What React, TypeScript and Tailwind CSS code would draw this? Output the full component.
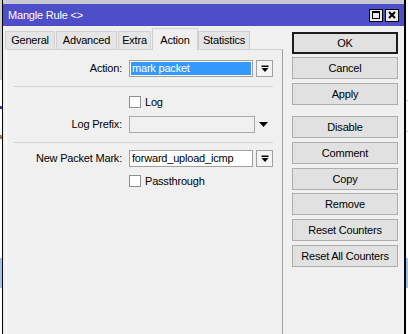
import React from "react";

const font = { fontFamily: '"Liberation Sans", Arial, sans-serif' };

function DropBtn() {
  return (
    <div className="w-[17px] h-[17px] ml-[3px] bg-[#f4f4f4] border border-[#a0a0a0] flex items-center justify-center">
      <svg width="8" height="8" viewBox="0 0 8 8">
        <rect x="0.5" y="0.5" width="7" height="1.5" fill="#000" />
        <polygon points="0.5,3 7.5,3 4,7" fill="#000" />
      </svg>
    </div>
  );
}

function Checkbox({ label }: { label: string }) {
  return (
    <div className="flex items-center h-[12px]">
      <div className="w-[12px] h-[12px] bg-white border border-[#8f8f8f]" />
      <span className="ml-[4px] leading-none">{label}</span>
    </div>
  );
}

function Btn({ label, def, className = "" }: { label: string; def?: boolean; className?: string }) {
  return (
    <div
      className={
        "h-[22px] w-[106px] flex items-center justify-center bg-[#e1e1e1] " +
        (def ? "border-2 border-[#1c1c1c] " : "border border-[#adadad] ") +
        className
      }
    >
      {label}
    </div>
  );
}

export default function App() {
  const tabs = [
    { n: "General", w: "w-[50px]" },
    { n: "Advanced", w: "w-[61px]" },
    { n: "Extra", w: "w-[33px]" },
  ];
  return (
    <div
      className="w-[408px] h-[334px] overflow-hidden bg-white flex text-[11px] tracking-[-0.2px] text-black"
      style={font}
    >
      {/* desktop strip left */}
      <div className="w-[2px] flex flex-col shrink-0 bg-white">
        <div className="h-[80px] bg-[#d0d0d0]" />
        <div className="h-[26px]" />
        <div className="h-[3px] bg-[#3a3ab0]" />
        <div className="h-[26px]" />
        <div className="h-[4px] bg-[#b07a30]" />
        <div className="h-[119px]" />
        <div className="h-[30px] bg-[#9cc2ee]" />
      </div>

      {/* window */}
      <div className="w-[404px] shrink-0 h-[334px] flex flex-col bg-[#f0f0f0] border-l border-r-2 border-black">
        <div className="h-[4px] bg-[#c9c9d6]" />
        {/* title bar */}
        <div className="h-[22px] bg-[#4e4ec8] flex items-center pl-[5px] pr-[5px]">
          <span className="text-white text-[11px]">Mangle Rule &lt;&gt;</span>
          <div className="ml-auto flex gap-[2px]">
            <div className="w-[14px] h-[13px] bg-[#ececec] border border-black flex items-center justify-center">
              <div className="w-[8px] h-[8px] border border-black border-t-2" />
            </div>
            <div className="w-[14px] h-[13px] bg-[#ececec] border border-black flex items-center justify-center">
              <svg width="8" height="8" viewBox="0 0 8 8">
                <path d="M1 1 L7 7 M7 1 L1 7" stroke="#000" strokeWidth="2" />
              </svg>
            </div>
          </div>
        </div>

        {/* body */}
        <div className="flex flex-1">
          {/* left column */}
          <div className="w-[280px] flex flex-col">
            <div className="h-[22px] pl-[2px] mt-[1px] flex items-end">
              {tabs.map((t) => (
                <div
                  key={t.n}
                  className={
                    t.w +
                    " h-[18px] mr-[1px] bg-[#e5e5e5] border border-b-0 border-[#d0d0d0] flex items-center justify-center"
                  }
                >
                  {t.n}
                </div>
              ))}
              <div className="w-[46px] h-[22px] -mb-px relative z-10 bg-[#f0f0f0] border border-b-0 border-[#d0d0d0] flex items-start justify-center pt-[3px]">
                Action
              </div>
              <div className="w-[52px] h-[18px] bg-[#e5e5e5] border border-b-0 border-[#d0d0d0] flex items-center justify-center">
                Statistics
              </div>
            </div>
            <div className="ml-[3px] w-[277px] flex-1 border-t border-t-[#d0d0d0] border-l border-l-[#ffffff] border-r border-r-[#a0a0a0] flex flex-col pt-[10px]">
              {/* Action row */}
              <div className="flex items-center h-[17px]">
                <div className="w-[116px] text-right pr-[1px]">Action:</div>
                <div className="ml-[6px] w-[124px] h-[17px] border border-[#a0a0a0] bg-white p-px">
                  <div className="h-full bg-[#3399ff] text-white flex items-center pl-[1px]">mark packet</div>
                </div>
                <DropBtn />
              </div>
              <div className="mt-[9px] ml-[7px] w-[259px] h-px bg-[#d4d4d4]" />
              <div className="mt-[9px] ml-[122px]">
                <Checkbox label="Log" />
              </div>
              <div className="flex items-center h-[17px] mt-[8px]">
                <div className="w-[116px] text-right pr-[1px]">Log Prefix:</div>
                <div className="ml-[6px] w-[126px] h-[17px] border border-[#a8a8a8] bg-[#f0f0f0]" />
                <svg className="ml-[4px]" width="9" height="5" viewBox="0 0 9 5">
                  <polygon points="0,0 9,0 4.5,5" fill="#000" />
                </svg>
              </div>
              <div className="mt-[9px] ml-[7px] w-[259px] h-px bg-[#d4d4d4]" />
              <div className="flex items-center h-[17px] mt-[7px]">
                <div className="w-[116px] text-right pr-[1px]">New Packet Mark:</div>
                <div className="ml-[6px] w-[124px] h-[17px] border border-[#a0a0a0] bg-white flex items-center pl-[2px]">
                  forward_upload_icmp
                </div>
                <DropBtn />
              </div>
              <div className="mt-[8px] ml-[122px]">
                <Checkbox label="Passthrough" />
              </div>
            </div>
          </div>

          {/* buttons */}
          <div className="ml-[9px] mt-[6px] flex flex-col">
            <Btn label="OK" def />
            <Btn label="Cancel" className="mt-[3px]" />
            <Btn label="Apply" className="mt-[4px]" />
            <Btn label="Disable" className="mt-[11px]" />
            <Btn label="Comment" className="mt-[4px]" />
            <Btn label="Copy" className="mt-[4px]" />
            <Btn label="Remove" className="mt-[3px]" />
            <Btn label="Reset Counters" className="mt-[4px]" />
            <Btn label="Reset All Counters" className="mt-[4px]" />
          </div>
        </div>
      </div>

      {/* desktop strip right */}
      <div className="w-[2px] flex flex-col shrink-0 bg-white">
        <div className="h-[100px]" />
        <div className="h-px bg-[#c8c8c8]" />
        <div className="h-[30px]" />
        <div className="h-px bg-[#c8c8c8]" />
        <div className="h-[126px]" />
        <div className="h-[30px] bg-[#9cc2ee]" />
      </div>
    </div>
  );
}
